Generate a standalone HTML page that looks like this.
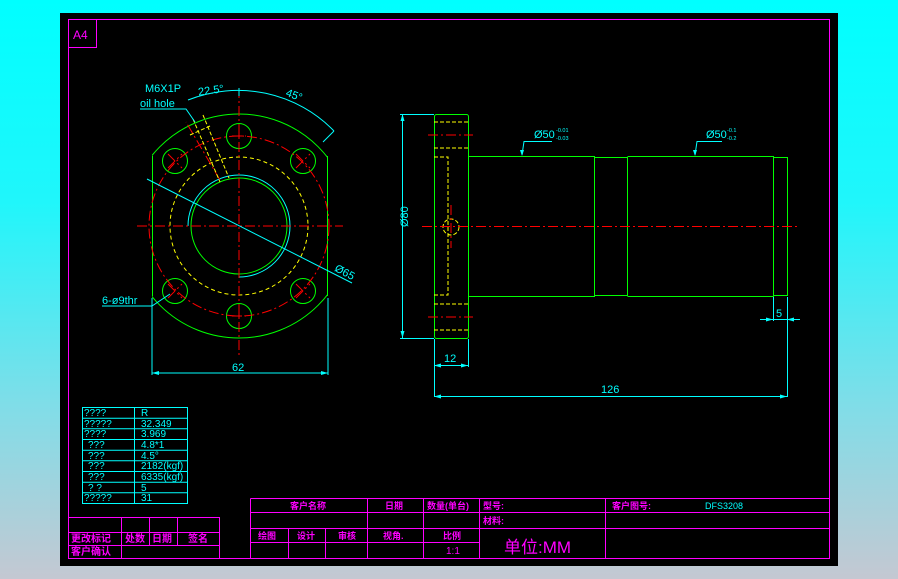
<!DOCTYPE html>
<html><head><meta charset="utf-8"><style>
html,body{margin:0;padding:0;width:898px;height:579px;overflow:hidden;background:linear-gradient(#00ffff 0%,#20f6fb 35%,#80dde8 70%,#c4c8d2 100%);}
svg{position:absolute;left:0;top:0}
text{font-family:"Liberation Sans","Noto Sans CJK SC",sans-serif}
</style></head><body>
<svg width="898" height="579" viewBox="0 0 898 579" xmlns="http://www.w3.org/2000/svg">
<rect x="60" y="13" width="778" height="553" fill="#000"/>
<g fill="none" stroke="#ff00ff" stroke-width="1">
<rect x="68.5" y="19.5" width="761" height="539"/>
<path d="M68.5 47.5H96.5V19.5"/>
</g>
<text x="73" y="39" fill="#ff00ff" font-size="12">A4</text>

<!-- LEFT VIEW -->
<defs><clipPath id="cf"><rect x="152" y="0" width="176" height="600"/></clipPath></defs>
<g fill="none" stroke="#00ff00" stroke-width="1">
<circle cx="239" cy="226" r="112" clip-path="url(#cf)"/>
<path d="M152.5 156V296M327.5 156V296"/>
<circle cx="239" cy="226" r="48"/>
<circle cx="239" cy="136" r="12.5"/><circle cx="239" cy="316" r="12.5"/>
<circle cx="175" cy="161" r="12.5"/><circle cx="303" cy="161" r="12.5"/>
<circle cx="175" cy="291" r="12.5"/><circle cx="303" cy="291" r="12.5"/>
</g>
<path d="M239 175A51 51 0 1 1 239 277M188 226A51 51 0 0 1 239 175" fill="none" stroke="#00ffff"/>
<circle cx="239" cy="226" r="69" fill="none" stroke="#ffff00" stroke-dasharray="4 3"/>
<circle cx="239" cy="226" r="90" fill="none" stroke="#ff0000" stroke-dasharray="10 3 2 3"/>
<g stroke="#ff0000" stroke-dasharray="10 3 2 3" fill="none">
<path d="M137 226H343M239 88V357"/>
<path d="M232 136H246M239 129V143M232 316H246M239 309V323"/>
<path d="M168 154L182 168M168 168L182 154M296 154L310 168M296 168L310 154M168 284L182 298M168 298L182 284M296 284L310 298M296 298L310 284"/>
<path d="M220 180L186 122"/>
</g>
<g stroke="#ffff00" stroke-dasharray="4 2" fill="none">
<path d="M193 119L220 182M203 115L229 178M190 135L210 126"/>
</g>
<g stroke="#00ffff" fill="none">
<path d="M147 179L352 283"/>
<path d="M188 100A134 134 0 0 1 334 131"/>
<path d="M334 131L323 142M239 88V96"/>
<path d="M140 109H186L195 122"/>
<path d="M102 306H152L170 294"/>
<path d="M152 298V375M328 298V375M152 373H328"/>
</g>
<g fill="#00ffff">
<path d="M152 373l7 -2v4zM328 373l-7 -2v4z"/>
</g>
<g fill="#00ffff" font-size="11">
<text x="145" y="92">M6X1P</text>
<text x="140" y="107">oil hole</text>
<text x="198" y="94" transform="rotate(-8 210 90)">22.5°</text>
<text x="286" y="99" transform="rotate(20 295 95)">45°</text>
<text x="334" y="276" transform="rotate(28 345 273)">Ø65</text>
<text x="102" y="304">6-ø9thr</text>
<text x="232" y="371">62</text>
</g>

<!-- RIGHT VIEW -->
<g fill="none" stroke="#00ff00">
<rect x="434.5" y="114.5" width="34" height="224" rx="2"/>
<path d="M468.5 156.5H594.5V296.5H468.5M594.5 157.5H627.5V295.5H594.5M627.5 156.5H773.5V296.5H627.5M773.5 157.5H787.5V295.5H773.5"/>
</g>
<g fill="none" stroke="#ffff00" stroke-dasharray="4 2">
<path d="M434 122H468M434 148H468M434 304H468M434 330H468M434 157H448V295H434"/>
<circle cx="451" cy="227" r="8"/>
</g>
<g fill="none" stroke="#ff0000" stroke-dasharray="10 3 2 3">
<path d="M422 226.5H798M428 135H473M428 317H473M451 205V248"/>
</g>
<g fill="none" stroke="#00ffff">
<path d="M400 114.5H434M400 338.5H434M402.5 114V338"/>
<path d="M434.5 339V397M468.5 339V367M787.5 297V397M773.5 297V321"/>
<path d="M434 365.5H468M434 396.5H787M760 319.5H800"/>
<path d="M552 141.5H524L522 155M722 141.5H697L695 155"/>
</g>
<g fill="#00ffff">
<path d="M402.5 114l-2 7h4zM402.5 338l-2 -7h4zM434 365.5l7-2v4zM468 365.5l-7-2v4zM434 396.5l7-2v4zM787 396.5l-7-2v4zM773 319.5l-7-2v4zM787 319.5l7-2v4zM522 156l-2-6h4zM695 156l-2-6h4z"/>
</g>
<g fill="#00ffff" font-size="11">
<text x="397" y="238" transform="rotate(-90 397 227)">Ø80</text>
<text x="444" y="362">12</text>
<text x="601" y="393">126</text>
<text x="776" y="317">5</text>
<text x="534" y="138">Ø50</text>
<text x="706" y="138">Ø50</text>
</g>
<g fill="#00ffff" font-size="5.5">
<text x="556" y="132">-0.01</text><text x="556" y="140">-0.03</text>
<text x="727" y="132">-0.1</text><text x="727" y="140">-0.2</text>
</g>

<!-- PARAM TABLE -->
<g fill="none" stroke="#00ffff">
<rect x="82.5" y="407.5" width="105" height="96"/>
<path d="M134.5 407.5V503.5M82.5 418.2H187.5M82.5 428.8H187.5M82.5 439.5H187.5M82.5 450.2H187.5M82.5 460.8H187.5M82.5 471.5H187.5M82.5 482.2H187.5M82.5 492.8H187.5"/>
</g>
<g fill="#00ffff" font-size="10">
<text x="84" y="416">????</text><text x="84" y="427">?????</text><text x="84" y="437">????</text><text x="88" y="448">???</text><text x="88" y="459">???</text><text x="88" y="469">???</text><text x="88" y="480">???</text><text x="88" y="491">?   ?</text><text x="84" y="501">?????</text>
<text x="141" y="416">R</text><text x="141" y="427">32.349</text><text x="141" y="437">3.969</text><text x="141" y="448">4.8*1</text><text x="141" y="459">4.5°</text><text x="141" y="469">2182(kgf)</text><text x="141" y="480">6335(kgf)</text><text x="141" y="491">5</text><text x="141" y="501">31</text>
</g>

<!-- LEFT BOTTOM BLOCK -->
<g fill="none" stroke="#ff00ff">
<path d="M68.5 517.5H219.5V559M68.5 532.5H219.5M68.5 545.5H219.5M121.5 517.5V559M149.5 517.5V545.5M177.5 517.5V545.5"/>
</g>
<g fill="#ff00ff" font-size="10" font-weight="bold">
<text x="71" y="542">更改标记</text><text x="125" y="542">处数</text><text x="152" y="542">日期</text><text x="188" y="542">签名</text>
<text x="71" y="555">客户确认</text>
</g>

<!-- TITLE BLOCK -->
<g fill="none" stroke="#ff00ff">
<path d="M250.5 498.5H829M250.5 498.5V559M250.5 512.5H829M250.5 528.5H829M250.5 542.5H479.5M288.5 528.5V559M325.5 528.5V559M367.5 498.5V559M423.5 498.5V559M479.5 498.5V559M605.5 498.5V559"/>
</g>
<g fill="#ff00ff" font-size="9" font-weight="bold">
<text x="290" y="509">客户名称</text>
<text x="385" y="509">日期</text>
<text x="427" y="509">数量(单台)</text>
<text x="483" y="509">型号:</text>
<text x="483" y="524">材料:</text>
<text x="612" y="509">客户图号:</text>
<text x="258" y="539">绘图</text><text x="297" y="539">设计</text><text x="338" y="539">审核</text>
<text x="383" y="539">视角.</text><text x="443" y="539">比例</text>
<text x="446" y="554" font-weight="normal" font-size="10">1:1</text>
</g>
<text x="504" y="553" fill="#ff00ff" font-size="17" font-family="Liberation Serif,'Noto Serif CJK SC',serif">单位:MM</text>
<text x="705" y="509" fill="#00ffff" font-size="9">DFS3208</text>
</svg>
</body></html>
